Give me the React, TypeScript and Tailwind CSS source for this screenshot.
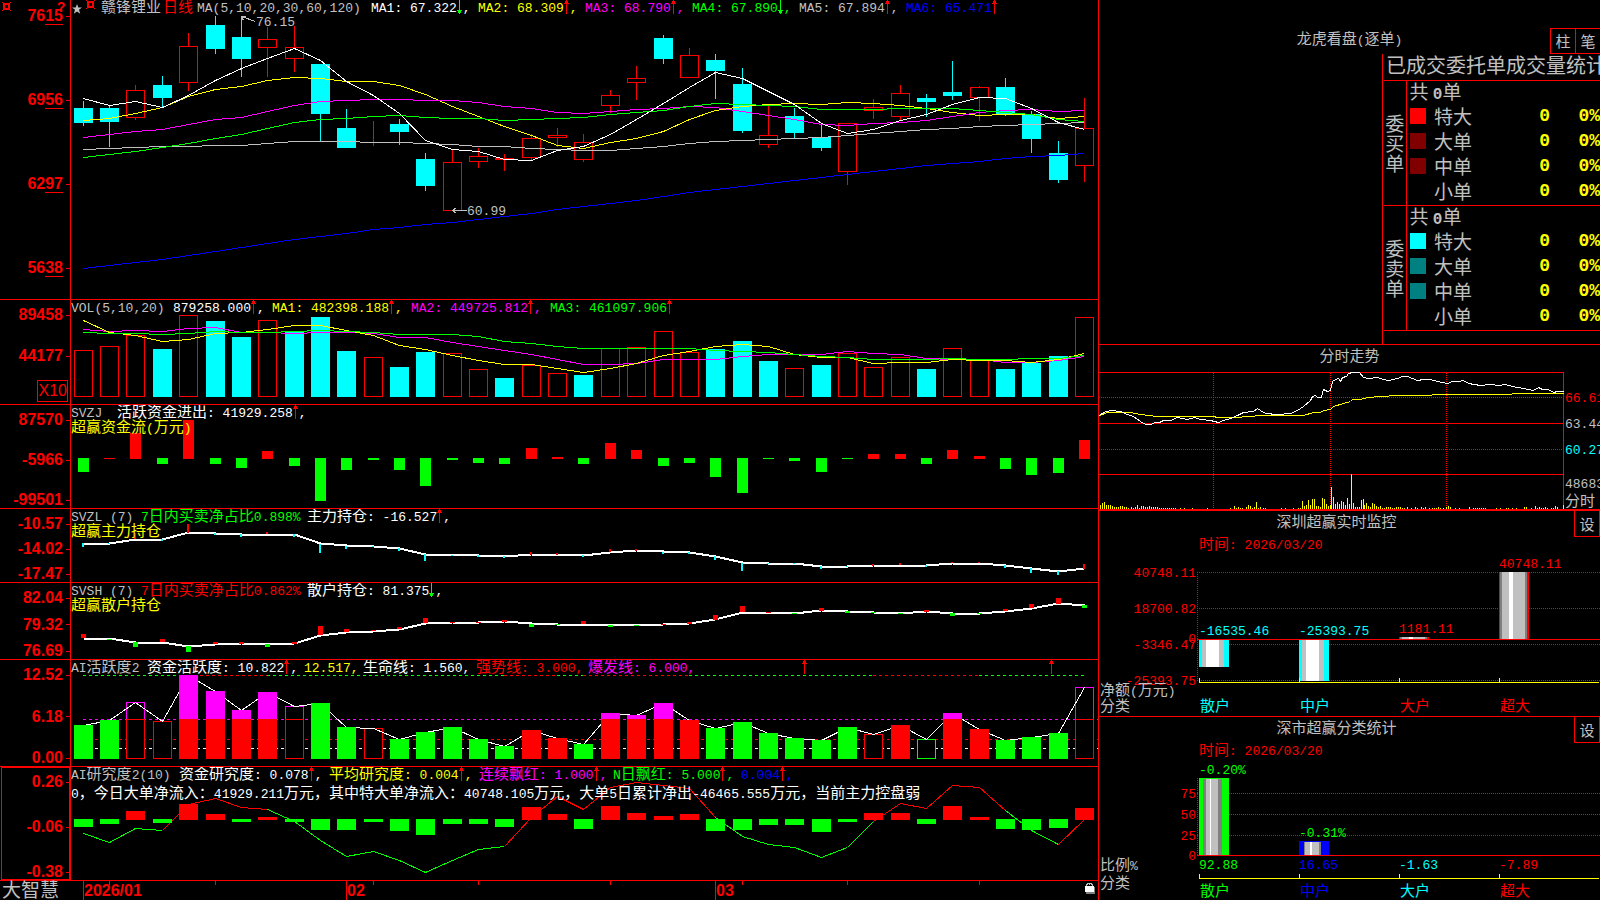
import { ReactNode } from "react";

const RED = "#ff0000";
const CYAN = "#00ffff";
const GREEN = "#00ff00";
const YELLOW = "#ffff00";
const MAGENTA = "#ff00ff";
const BLUE = "#0000ff";
const GRAY = "#c0c0c0";
const DARK = "#808080";
const WHITE = "#ffffff";

const PLOT_W = 1027;

// centre pixel of the n-th trading day inside a plot
const dayX = (i:number) => Math.floor(12.28 + 26.352 * i);

// levels are kept in thirds of a pixel, off is the start of the panel
const level = (v:number, off:number) => Math.round((v - 1) / 3 - off);

type Candle = [number, number, number, number, string];
const candles:Candle[] = [
    [101,108,123,126,'c'],[106,108,122,147,'c'],[85,90,117,120,'r'],[76,85,98,107,'c'],
    [33,46,82,91,'r'],[16,25,49,54,'c'],[16,37,59,77,'c'],[27,39,47,77,'r'],
    [26,47,58,72,'r'],[64,64,114,141,'c'],[109,128,148,148,'c'],[121,122,122,146,'r'],
    [119,124,132,145,'c'],[153,159,186,191,'c'],[150,162,210,210,'r'],[148,156,161,168,'r'],
    [154,158,159,171,'r'],[134,138,157,160,'r'],[128,135,137,147,'r'],[134,142,159,162,'r'],
    [90,95,105,113,'r'],[66,78,82,100,'r'],[35,38,59,64,'c'],[48,55,77,77,'r'],
    [54,60,71,99,'c'],[68,84,131,133,'c'],[106,135,144,148,'r'],[108,116,133,138,'c'],
    [125,137,148,151,'c'],[123,123,171,185,'r'],[99,107,110,119,'r'],[85,93,116,120,'r'],
    [94,98,102,117,'c'],[61,92,96,100,'c'],[86,87,97,121,'r'],[78,87,115,116,'c'],
    [111,114,139,153,'c'],[141,153,180,183,'c'],[98,128,165,182,'r'],
];

const ma5 = [295,316,304,321,286,240,204,176,146,182,243,285,339,421,448,455,478,481,452,440,402,358,310,262,216,236,274,313,370,400,388,361,343,313,293,296,325,367,387];
const ma10 = [361,355,340,322,290,268,259,241,232,235,243,244,256,284,318,350,378,407,435,445,428,414,395,357,330,319,313,310,312,307,311,316,326,338,346,342,342,355,349];
const ma20 = [412,403,394,387,373,358,351,334,316,304,301,298,298,301,302,308,318,324,336,341,334,328,324,319,323,334,347,357,373,376,370,367,361,349,338,331,328,333,331];
const ma30 = [472,463,454,442,430,415,403,385,367,358,355,350,346,352,355,355,360,358,355,352,343,337,330,319,311,313,315,319,328,328,328,325,325,325,332,338,343,358,365];
const ma60 = [448,446,443,439,438,436,436,431,425,425,425,428,428,431,433,439,439,444,449,451,451,446,438,431,425,422,419,416,411,407,400,395,388,385,380,377,373,370,367];
const ma120 = [804,795,786,777,766,754,742,730,718,709,700,689,681,674,666,657,649,640,628,619,611,602,590,577,568,559,550,541,532,522,514,505,496,490,485,476,470,466,460];

type Bar = [number, string];
const volume:Bar[] = [
    [166,'r'],[154,'r'],[121,'r'],[162,'c'],[61,'r'],[78,'c'],[126,'c'],[76,'r'],[108,'c'],[66,'c'],
    [168,'c'],[187,'r'],[216,'c'],[171,'c'],[175,'r'],[223,'r'],[249,'c'],[211,'r'],[235,'r'],[240,'c'],
    [160,'r'],[157,'r'],[109,'r'],[172,'r'],[162,'c'],[138,'c'],[198,'c'],[220,'r'],[210,'c'],[175,'r'],
    [217,'r'],[187,'r'],[222,'c'],[160,'r'],[193,'r'],[222,'c'],[204,'c'],[183,'c'],[67,'r'],
];
const vol5 = [76,112,121,139,133,115,111,103,92,91,107,121,151,163,181,195,207,208,220,232,219,204,182,170,155,148,155,178,186,187,205,202,202,193,196,196,202,193,175];
const vol10 = [103,109,106,109,100,97,111,112,114,112,112,116,127,128,141,154,167,178,192,208,208,205,193,193,193,184,178,178,178,169,175,178,190,193,194,202,202,197,184];
const vol20 = [112,115,115,118,115,110,112,112,110,107,109,113,118,118,118,125,139,145,154,160,160,160,160,160,166,169,173,178,184,188,193,193,193,190,193,193,190,190,181];

const moneyFlow:Bar[] = [
    [531,'g'],[489,'r'],[414,'r'],[507,'g'],[375,'r'],[507,'g'],[519,'g'],[468,'r'],[513,'g'],[618,'g'],
    [525,'g'],[495,'g'],[525,'g'],[573,'g'],[495,'g'],[504,'g'],[507,'g'],[459,'r'],[486,'r'],[507,'g'],
    [444,'r'],[465,'r'],[513,'g'],[504,'g'],[546,'g'],[594,'g'],[492,'g'],[498,'g'],[531,'g'],[492,'g'],
    [477,'r'],[477,'r'],[507,'g'],[465,'r'],[483,'r'],[522,'g'],[540,'g'],[534,'g'],[435,'r'],
];

const mainHold = [115,115,102,102,83,85,87,87,88,116,122,124,129,147,149,151,153,149,149,150,141,137,140,141,154,173,174,174,183,183,182,180,180,174,174,181,189,198,191];
const mainTicks:Bar[] = [
    [126,'c'],[115,'c'],[84,'r'],[108,'c'],[57,'r'],[90,'c'],[96,'c'],[81,'r'],[95,'c'],[144,'c'],
    [131,'c'],[127,'c'],[138,'c'],[168,'c'],[152,'c'],[156,'c'],[158,'c'],[141,'r'],[144,'r'],[156,'c'],
    [132,'r'],[132,'r'],[147,'c'],[147,'c'],[165,'c'],[198,'c'],[177,'c'],[177,'c'],[192,'c'],[186,'c'],
    [177,'r'],[174,'r'],[186,'c'],[171,'r'],[172,'r'],[189,'c'],[204,'c'],[210,'c'],[177,'r'],
];

const retailHold = [399,401,411,411,424,417,416,417,416,391,381,379,373,354,353,352,350,356,357,357,359,360,359,356,344,321,323,324,317,318,322,324,320,324,324,319,310,296,300];
const retailTicks:Bar[] = [
    [387,'r'],[405,'g'],[426,'g'],[402,'r'],[441,'g'],[411,'r'],[411,'r'],[426,'g'],[411,'r'],[363,'r'],
    [372,'r'],[375,'r'],[366,'r'],[339,'r'],[350,'r'],[350,'r'],[345,'r'],[366,'g'],[360,'g'],[348,'r'],
    [366,'g'],[363,'g'],[356,'r'],[350,'r'],[330,'r'],[303,'r'],[320,'r'],[327,'g'],[309,'r'],[324,'g'],
    [325,'g'],[327,'g'],[315,'r'],[333,'g'],[327,'g'],[312,'r'],[297,'r'],[279,'r'],[309,'g'],
];

// g / r are filled, G / R are hollow, m / M carry a magenta cap over the 6.0 line
const activity:Bar[] = [
    [210,'g'],[195,'g'],[142,'M'],[199,'R'],[60,'m'],[108,'m'],[165,'m'],[111,'m'],[154,'M'],[144,'g'],
    [216,'g'],[220,'R'],[252,'g'],[231,'g'],[216,'g'],[252,'g'],[273,'g'],[225,'r'],[249,'r'],[267,'g'],
    [174,'m'],[180,'m'],[144,'m'],[195,'r'],[219,'g'],[201,'g'],[234,'g'],[249,'g'],[255,'g'],[216,'g'],
    [238,'R'],[210,'r'],[253,'G'],[174,'m'],[222,'r'],[255,'g'],[246,'g'],[234,'g'],[97,'M'],
];
const peakRuns:[number, number, string][] = [
    [0,4,GREEN],[4,7,RED],[7,16,GREEN],[16,18,RED],[18,19,GREEN],[19,23,RED],[23,30,GREEN],[30,34,RED],[34,38,GREEN],
];

const research:Bar[] = [
    [516,'g'],[507,'g'],[468,'r'],[504,'g'],[447,'r'],[477,'r'],[501,'g'],[486,'r'],[501,'g'],[525,'g'],
    [525,'g'],[501,'g'],[528,'g'],[540,'g'],[507,'g'],[507,'g'],[516,'g'],[456,'r'],[477,'r'],[522,'g'],
    [453,'r'],[474,'r'],[483,'r'],[477,'r'],[528,'g'],[525,'g'],[510,'g'],[510,'g'],[531,'g'],[501,'g'],
    [474,'r'],[474,'r'],[507,'g'],[453,'r'],[486,'r'],[522,'g'],[525,'g'],[519,'g'],[459,'r'],
];
const researchLine = [535,562,520,526,448,430,457,463,498,556,604,589,616,652,616,583,574,486,425,463,397,382,392,400,487,544,568,577,607,577,500,445,460,391,397,465,526,567,494];
const researchRuns:[number, number, string][] = [
    [0,3,GREEN],[3,7,RED],[7,16,GREEN],[16,24,RED],[24,30,GREEN],[30,35,RED],[35,37,GREEN],[37,38,RED],
];

const minutePrice = [27,227,40,217,60,211,90,213,110,222,128,228,150,243,165,252,180,252,195,246,207,248,218,242,240,240,262,233,290,239,312,233,330,239,360,242,385,246,400,240,420,234,440,225,460,217,490,213,500,206,510,212,525,220,560,224,600,220,620,212,640,200,660,180,665,169,675,167,680,173,692,172,700,147,710,154,720,150,725,125,735,117,745,115,750,123,755,112,768,108,775,100,785,97,808,97,820,112,835,115,860,112,880,118,895,121,920,115,935,109,950,110,980,121,1000,117,1020,119,1040,124,1070,129,1085,124,1105,124,1118,122,1135,130,1170,135,1200,132,1225,135,1245,132,1265,138,1300,144,1330,150,1343,142,1355,147,1375,149,1390,156,1400,154,1420,155];
const minuteAvg = [27,225,50,218,120,217,150,222,200,229,370,230,380,232,440,232,470,229,520,226,640,226,670,218,690,216,700,210,720,207,730,200,780,185,785,178,810,178,830,172,870,169,920,167,1020,165,1030,163,1260,162,1270,160,1420,160];
const minuteVol = [31,12,37,17,43,21,49,12,55,12,61,12,67,9,73,6,79,6,85,6,91,9,97,9,103,6,109,6,115,4,124,6,130,3,136,6,142,12,148,4,154,9,160,9,166,7,172,6,178,9,184,6,190,6,196,6,202,6,208,3,214,3,220,3,226,3,232,3,238,3,244,3,250,3,256,3,271,3,283,3,307,3,352,3,421,3,433,9,439,4,445,6,451,4,457,3,469,6,475,12,481,9,487,3,493,6,499,21,505,3,511,6,520,3,526,3,574,3,586,3,610,3,625,3,631,3,637,24,643,9,649,12,655,27,661,12,667,30,673,30,679,9,685,9,691,6,697,33,703,30,709,15,715,9,721,12,724,66,730,36,736,15,742,21,748,15,754,24,760,21,766,12,772,33,778,15,784,105,790,18,796,6,802,6,808,6,814,27,820,30,823,12,829,18,835,9,841,6,847,18,853,15,859,9,865,6,871,9,877,3,883,3,889,6,895,6,901,6,907,3,913,3,919,6,925,6,931,6,937,3,943,3,952,6,964,3,976,6,982,3,994,6,1000,3,1006,6,1018,3,1026,3,1032,3,1040,3,1045,6,1051,3,1060,3,1069,6,1075,9,1081,6,1096,3,1108,3,1138,6,1150,3,1156,3,1162,3,1168,3,1174,3,1180,3,1186,3,1219,3,1231,3,1249,3,1255,3,1267,3,1279,3,1303,6,1309,6,1324,3,1336,9,1342,3,1348,6,1354,3,1360,3,1366,6,1372,3,1384,3,1390,3,1396,9,1402,6,1420,12];

const CJK = /([\u2e80-\u9fff\uff00-\uffef]+)/;

// latin runs are half width mono, chinese runs are a bit larger
function Mix(props:{children:string}) {
    return (
        <>
            {props.children.split(CJK).map((part,index)=>(
                index % 2 == 1
                    ? <span key={index} className="font-['Noto_Sans_CJK_SC',sans-serif] text-[15px] leading-3">{part}</span>
                    : part
            ))}
        </>
    );
}

function SvgText(props:{x:number, y:number, fill:string, end?:boolean, children:string}) {
    return (
        <text x={props.x} y={props.y} fill={props.fill} textAnchor={props.end ? "end" : "start"} className="text-[13px] whitespace-pre">
            {props.children.split(CJK).map((part,index)=>(
                index % 2 == 1
                    ? <tspan key={index} className="font-['Noto_Sans_CJK_SC',sans-serif] text-[15px]">{part}</tspan>
                    : part
            ))}
        </text>
    );
}

function Arrow(props:{down?:boolean}) {
    return (
        <svg width="6" height="15" viewBox="0 0 6 15" shapeRendering="crispEdges" className="shrink-0">
            {props.down
                ? <path d="M2 0h1v10h2v1h-1v2h-1v1h-1v-1h-1v-2h-1v-1h2z" fill={GREEN}/>
                : <path d="M2 0h1v1h1v2h1v1h-2v10h-1v-10h-2v-1h1v-2h1z" fill={RED}/>}
        </svg>
    );
}

type Seg = { text:string, cls:string, arrow?:'up'|'down', tail?:string };

function Header(props:{segs:Seg[]}) {
    return (
        <div className="relative flex h-[15px] leading-[18px] whitespace-pre">
            {props.segs.map((seg,index)=>(
                <div key={index} className={`flex shrink-0 ${seg.cls}`}>
                    <span><Mix>{seg.text}</Mix></span>
                    {seg.arrow && <Arrow down={seg.arrow == 'down'}/>}
                    {seg.tail && <span>{seg.tail}</span>}
                </div>
            ))}
        </div>
    );
}

function Panel(props:{cls:string, h:number, axis:ReactNode, chart:ReactNode, children:ReactNode}) {
    return (
        <section className={`flex border-b border-[#ff0000] ${props.cls}`}>
            <div className="flex w-[70px] shrink-0 flex-col">{props.axis}</div>
            <div className="relative min-w-0 flex-1 overflow-hidden border-l border-[#ff0000]">
                <svg className="absolute inset-0 h-full w-full" viewBox={`0 0 ${PLOT_W} ${props.h}`} preserveAspectRatio="none" shapeRendering="crispEdges">
                    {props.chart}
                </svg>
                {props.children}
            </div>
        </section>
    );
}

function Axis(props:{labels:string[], cls:string, underline?:boolean}) {
    return (
        <div className={`flex flex-col justify-between ${props.cls}`}>
            {props.labels.map((label)=>(
                <div key={label} className="flex h-4 items-center justify-end gap-[3px] font-['Liberation_Sans',sans-serif] text-base leading-4 font-bold text-[#ff0000]">
                    {props.underline
                        ? <span>{label.slice(0,2)}<span className="border-b border-[#ff0000]">{label.slice(2)}</span></span>
                        : <span>{label}</span>}
                    <span className="h-px w-1 bg-[#ff0000]"/>
                </div>
            ))}
        </div>
    );
}

function Line(props:{data:number[], color:string, off?:number, from?:number, to?:number, width?:number}) {
    const from = props.from ?? 0;
    const to = props.to ?? props.data.length - 1;
    const pts = props.data.slice(from,to + 1).map((v,i)=>`${dayX(i + from) + 0.5},${level(v,props.off ?? 0) + 0.5}`).join(' ');
    return <polyline points={pts} fill="none" stroke={props.color} strokeWidth={props.width ?? 1}/>;
}

function Hollow(props:{i:number, top:number, bottom:number, color:string}) {
    return <rect x={dayX(props.i) - 8.5} y={props.top + 0.5} width={18} height={Math.max(props.bottom - props.top,0)} fill="none" stroke={props.color}/>;
}

// bars hanging from or standing on the zero level
function ZeroBars(props:{data:Bar[], zero:number, off:number, width:number}) {
    return (
        <>
            {props.data.map(([v,kind],i)=>{
                const y = Math.round(v / 3 - props.off);
                const up = kind == 'r';
                const top = up ? y : props.zero;
                const bottom = up ? props.zero + 1 : y;
                return <rect key={i} x={dayX(i) - (props.width - 1) / 2} y={top} width={props.width} height={Math.max(bottom - top,1)} fill={up ? RED : GREEN}/>;
            })}
        </>
    );
}

function Ticks(props:{data:Bar[], line:number[], off:number, width:number}) {
    return (
        <>
            {props.data.map(([v,kind],i)=>{
                const a = Math.round(v / 3 - props.off);
                const b = Math.round(props.line[i] / 3 - props.off);
                const color = kind == 'r' ? RED : kind == 'g' ? GREEN : CYAN;
                return <rect key={i} x={dayX(i) - Math.floor(props.width / 2)} y={Math.min(a,b)} width={props.width} height={Math.max(Math.abs(a - b),1)} fill={color}/>;
            })}
        </>
    );
}

function CandleChart() {
    return (
        <>
            {candles.map(([high,top,bottom,low,kind],i)=>(
                kind == 'c'
                    ? <g key={i} fill={CYAN}>
                        <rect x={dayX(i)} y={high} width={1} height={low - high}/>
                        <rect x={dayX(i) - 9} y={top} width={19} height={bottom - top}/>
                    </g>
                    : <g key={i}>
                        <rect x={dayX(i)} y={high} width={1} height={top - high} fill={RED}/>
                        <rect x={dayX(i)} y={bottom} width={1} height={low - bottom} fill={RED}/>
                        <Hollow i={i} top={top} bottom={bottom} color={RED}/>
                    </g>
            ))}
            <Line data={ma120} color={BLUE}/>
            <Line data={ma60} color={GRAY}/>
            <Line data={ma10} color={YELLOW}/>
            <Line data={ma20} color={MAGENTA}/>
            <Line data={ma30} color={GREEN}/>
            <Line data={ma5} color={WHITE}/>
            <path d="M170.5 16.5l14 5M170.5 16.5h4M170.5 16.5l2 4M381.5 210.5h14M381.5 210.5l4 -3M381.5 210.5l4 3" stroke={GRAY} fill="none"/>
        </>
    );
}

function VolumeChart() {
    return (
        <>
            {volume.map(([v,kind],i)=>{
                const top = Math.round(v / 3 - 5);
                return kind == 'c'
                    ? <rect key={i} x={dayX(i) - 9} y={top} width={19} height={97 - top} fill={CYAN}/>
                    : <Hollow key={i} i={i} top={top} bottom={96} color={RED}/>;
            })}
            <Line data={vol10} color={MAGENTA} off={5}/>
            <Line data={vol5} color={YELLOW} off={5}/>
            <Line data={vol20} color={GREEN} off={5}/>
        </>
    );
}

function ActivityChart() {
    const tops = activity.map((bar)=>bar[0]);
    return (
        <>
            {peakRuns.map(([from,to,color])=>(
                <line key={from} x1={dayX(from)} x2={dayX(to)} y1={15.5} y2={15.5} stroke={color} strokeDasharray="3 3"/>
            ))}
            <line x1={12} x2={PLOT_W} y1={59.5} y2={59.5} stroke={MAGENTA} strokeDasharray="3 3"/>
            <line x1={12} x2={PLOT_W} y1={79.5} y2={79.5} stroke={RED} strokeDasharray="3 3"/>
            <line x1={12} x2={PLOT_W} y1={88.5} y2={88.5} stroke={WHITE} strokeDasharray="3 3"/>
            {activity.map(([v,kind],i)=>{
                const top = Math.round(v / 3 - 5);
                if (!'MRG'.includes(kind)) return null;
                return (
                    <g key={i}>
                        <rect x={dayX(i) - 9} y={top} width={19} height={98 - top} fill="#000000"/>
                        {kind == 'M' && <Hollow i={i} top={top} bottom={59} color={MAGENTA}/>}
                        <Hollow i={i} top={kind == 'M' ? 59 : top} bottom={98} color={kind == 'G' ? GREEN : RED}/>
                    </g>
                );
            })}
            <Line data={tops} color={WHITE} off={5}/>
            {activity.map(([v,kind],i)=>{
                const top = Math.round(v / 3 - 5);
                if (!'mrg'.includes(kind)) return null;
                return (
                    <g key={i}>
                        <rect x={dayX(i) - 9} y={top} width={19} height={99 - top} fill={kind == 'g' ? GREEN : RED}/>
                        {kind == 'm' && <rect x={dayX(i) - 9} y={top} width={19} height={59 - top} fill={MAGENTA}/>}
                    </g>
                );
            })}
        </>
    );
}

function TimeAxis() {
    return (
        <div className="flex h-[19px] text-[#ff0000]">
            <div className="w-[70px] shrink-0 pl-[2px] font-['Noto_Sans_CJK_SC',sans-serif] text-[19px] leading-4 whitespace-nowrap text-[#c0c0c0]">大智慧</div>
            <div className="relative flex-1 border-l border-transparent">
                <svg className="absolute inset-0 h-full w-full" viewBox={`0 0 ${PLOT_W} 19`} preserveAspectRatio="none" shapeRendering="crispEdges">
                    {[0,10,24].map((i)=><rect key={i} x={dayX(i)} y={0} width={1} height={19} fill={RED}/>)}
                    {[1,5,11,15,20,25,29,34].map((i)=><rect key={i} x={dayX(i)} y={0} width={1} height={4} fill={RED}/>)}
                </svg>
                {([[0,"2026/01"],[10,"02"],[24,"03"]] as [number, string][]).map(([i,label])=>(
                    <span key={label} className="absolute top-[1px] pl-px font-['Liberation_Sans',sans-serif] text-base leading-[18px] font-bold" style={{ left: `${dayX(i) / PLOT_W * 100}%` }}>{label}</span>
                ))}
                <svg className="absolute top-[1px] right-[2px]" width="12" height="12" viewBox="0 0 12 12" shapeRendering="crispEdges">
                    <path d="M2.5 4v-2h1v-1h4v1h1v2" fill="none" stroke={GRAY}/>
                    <rect x="5" y="2" width="1" height="1" fill={GRAY}/>
                    <rect x="2" y="5" width="9" height="7" fill={DARK}/>
                    <rect x="1" y="4" width="9" height="6" fill={WHITE}/>
                </svg>
            </div>
        </div>
    );
}

const sides = [
    { side:"委买单", rows:[["特大","bg-[#ff0000]"],["大单","bg-[#800000]"],["中单","bg-[#800000]"],["小单",""]] },
    { side:"委卖单", rows:[["特大","bg-[#00ffff]"],["大单","bg-[#008080]"],["中单","bg-[#008080]"],["小单",""]] },
];

function OrderTable() {
    return (
        <div className="ml-[283px] h-[290px] overflow-hidden border-l border-[#ff0000] pl-px font-['Noto_Sans_CJK_SC',sans-serif] text-[19px] leading-5 text-[#c0c0c0]">
            <h3 className="h-[26px] pl-[2px] text-xl leading-[22px] whitespace-nowrap">已成交委托单成交量统计</h3>
            <table className="w-full table-fixed border-collapse">
                <colgroup>
                    <col className="w-[22px]"/>
                    <col className="w-[26px]"/>
                    <col/>
                    <col className="w-10"/>
                    <col className="w-[50px]"/>
                </colgroup>
                {sides.map((group)=>(
                    <tbody key={group.side} className="border-y border-[#ff0000] align-top">
                        <tr className="h-[25px]">
                            <th rowSpan={5} className="border-r border-[#ff0000] p-0 text-center align-middle font-normal">
                                {group.side.split('').map((ch)=><span key={ch} className="block">{ch}</span>)}
                            </th>
                            <td colSpan={4} className="p-0 pl-[3px]">共 <b className="font-['Liberation_Mono',monospace] text-base leading-4">0</b>单</td>
                        </tr>
                        {group.rows.map(([name,color])=>(
                            <tr key={name} className="h-[25px]">
                                <td className="p-0 pt-[2px] pl-[3px]"><span className={`block size-4 ${color}`}/></td>
                                <td className="p-0 pl-[2px]">{name}</td>
                                <td className="p-0 text-right font-['Liberation_Mono',monospace] text-lg leading-5 font-bold text-[#ffff00]">0</td>
                                <td className="p-0 text-right font-['Liberation_Mono',monospace] text-lg leading-5 font-bold text-[#ffff00]">0%</td>
                            </tr>
                        ))}
                    </tbody>
                ))}
            </table>
        </div>
    );
}

const BUTTON = "h-[26px] w-[26px] shrink-0 border border-[#ff0000] font-['Noto_Sans_CJK_SC',sans-serif] text-[15px] leading-5 text-[#c0c0c0]";

function MinuteChart() {
    const pairs = (data:number[]) => data.reduce<string[]>((out,v,i)=>{
        if (i % 2 == 0) out.push(`${Math.round((v - 27) / 3) + 0.5},${Math.round((data[i + 1] - 1) / 3 - 31) + 0.5}`);
        return out;
    },[]).join(' ');

    return (
        <svg className="block" width="502" height="138" viewBox="0 0 502 138">
            <g shapeRendering="crispEdges" fill="none" stroke={RED}>
                <path d="M0 1.500h464.500v136.500M0 52.500h464M0 103.500h464"/>
                <path d="M0 26.500h464M0 78.500h464M114.500 2v136M231.500 2v136M347.500 2v136" strokeDasharray="1 1"/>
                {minuteVol.map((v,i)=>(
                    i % 2 == 0 && <rect key={i} x={Math.round((v - 28) / 3)} y={138 - Math.round(minuteVol[i + 1] / 3)} width={1} height={Math.round(minuteVol[i + 1] / 3)} fill={YELLOW} stroke="none"/>
                ))}
                <polyline points={pairs(minuteAvg)} stroke={YELLOW}/>
                <polyline points={pairs(minutePrice)} stroke={WHITE}/>
            </g>
            <SvgText x={466} y={31} fill={RED}>66.61</SvgText>
            <SvgText x={466} y={57} fill={GRAY}>63.44</SvgText>
            <SvgText x={466} y={83} fill={CYAN}>60.27</SvgText>
            <SvgText x={466} y={117} fill={GRAY}>48683</SvgText>
            <SvgText x={466} y={135} fill={GRAY}>分时</SvgText>
        </svg>
    );
}

// vertical stripes that make a bar look like a cylinder
function Cylinder(props:{x:number, top:number, bottom:number, stripes:[number, string][]}) {
    let x = props.x;
    return (
        <g shapeRendering="crispEdges">
            {props.stripes.map(([w,color],i)=>{
                const at = x;
                x += w;
                return <rect key={i} x={at} y={props.top} width={w} height={props.bottom - props.top} fill={color}/>;
            })}
        </g>
    );
}

const lightTube:[number, string][] = [[3,CYAN],[4,GRAY],[13,WHITE],[5,GRAY],[5,CYAN]];
const redTube:[number, string][] = [[1,RED],[2,DARK],[7,GRAY],[4,WHITE],[12,GRAY],[2,DARK],[2,RED]];
const greenTube:[number, string][] = [[4,GREEN],[3,DARK],[4,GRAY],[1,WHITE],[7,GRAY],[4,DARK],[7,GREEN]];
const blueTube:[number, string][] = [[5,BLUE],[1,DARK],[5,GRAY],[2,WHITE],[7,GRAY],[2,DARK],[8,BLUE]];

function MonitorChart() {
    return (
        <svg className="block" width="502" height="179" viewBox="0 0 502 179">
            <g shapeRendering="crispEdges" fill="none">
                <path d="M98.500 35v108M98 35.500h404M98 71.500h404M98 107.500h404M98 143.500h404" stroke={RED} strokeDasharray="1 1"/>
                <path d="M98 102.500h404" stroke={RED}/>
            </g>
            <Cylinder x={100} top={103} bottom={130} stripes={lightTube}/>
            <Cylinder x={200} top={103} bottom={144} stripes={lightTube}/>
            <Cylinder x={300} top={100} bottom={102} stripes={redTube}/>
            <Cylinder x={400} top={35} bottom={102} stripes={redTube}/>
            <path d="M100.500 141v4.500h399.500M200.500 141v4M300.500 141v4M400.500 141v4" stroke={YELLOW} fill="none" shapeRendering="crispEdges"/>
            <SvgText x={100} y={12} fill={RED}>时间: 2026/03/20</SvgText>
            <SvgText x={97} y={40} fill={RED} end>40748.11</SvgText>
            <SvgText x={97} y={76} fill={RED} end>18700.82</SvgText>
            <SvgText x={97} y={106} fill={RED} end>0</SvgText>
            <SvgText x={97} y={112} fill={RED} end>-3346.47</SvgText>
            <SvgText x={97} y={148} fill={RED} end>-25393.75</SvgText>
            <SvgText x={100} y={98} fill={CYAN}>-16535.46</SvgText>
            <SvgText x={200} y={98} fill={CYAN}>-25393.75</SvgText>
            <SvgText x={300} y={96} fill={RED}>1181.11</SvgText>
            <SvgText x={400} y={31} fill={RED}>40748.11</SvgText>
            <SvgText x={1} y={158} fill={GRAY}>净额(万元)</SvgText>
            <SvgText x={1} y={174} fill={GRAY}>分类</SvgText>
            <SvgText x={101} y={174} fill={CYAN}>散户</SvgText>
            <SvgText x={201} y={174} fill={CYAN}>中户</SvgText>
            <SvgText x={301} y={174} fill={RED}>大户</SvgText>
            <SvgText x={401} y={174} fill={RED}>超大</SvgText>
        </svg>
    );
}

function ShareChart() {
    return (
        <svg className="block" width="502" height="157" viewBox="0 0 502 157">
            <g shapeRendering="crispEdges" fill="none">
                <path d="M98.500 35v77M98 50.500h404M98 71.500h404M98 92.500h404" stroke={RED} strokeDasharray="1 1"/>
                <path d="M98 112.500h404" stroke={RED}/>
            </g>
            <Cylinder x={100} top={36} bottom={112} stripes={greenTube}/>
            <Cylinder x={200} top={99} bottom={112} stripes={blueTube}/>
            <rect x={100} y={35} width={30} height={1} fill={GREEN}/>
            <rect x={200} y={98} width={30} height={1} fill={BLUE}/>
            <path d="M100.500 131v4.500h399.500M200.500 131v4M300.500 131v4M400.500 131v4" stroke={YELLOW} fill="none" shapeRendering="crispEdges"/>
            <SvgText x={100} y={12} fill={RED}>时间: 2026/03/20</SvgText>
            <SvgText x={100} y={31} fill={GREEN}>-0.20%</SvgText>
            <SvgText x={200} y={94} fill={GREEN}>-0.31%</SvgText>
            <SvgText x={97} y={55} fill={RED} end>75</SvgText>
            <SvgText x={97} y={76} fill={RED} end>50</SvgText>
            <SvgText x={97} y={97} fill={RED} end>25</SvgText>
            <SvgText x={97} y={117} fill={RED} end>0</SvgText>
            <SvgText x={100} y={126} fill={GREEN}>92.88</SvgText>
            <SvgText x={200} y={126} fill={BLUE}>16.65</SvgText>
            <SvgText x={300} y={126} fill={CYAN}>-1.63</SvgText>
            <SvgText x={400} y={126} fill={RED}>-7.89</SvgText>
            <SvgText x={1} y={127} fill={GRAY}>比例%</SvgText>
            <SvgText x={1} y={145} fill={GRAY}>分类</SvgText>
            <SvgText x={101} y={153} fill={GREEN}>散户</SvgText>
            <SvgText x={201} y={153} fill={BLUE}>中户</SvgText>
            <SvgText x={301} y={153} fill={CYAN}>大户</SvgText>
            <SvgText x={401} y={153} fill={RED}>超大</SvgText>
        </svg>
    );
}

function Burst() {
    return (
        <svg width="9" height="9" viewBox="0 0 9 9" shapeRendering="crispEdges">
            <path d="M0 0h1v1h-1zM8 0h1v1h-1zM0 8h1v1h-1zM8 8h1v1h-1z" fill={RED}/>
            <rect x="2" y="2" width="5" height="5" fill="none" stroke={RED} strokeWidth="2"/>
        </svg>
    );
}

function Title(props:{children:string}) {
    return <h2 className="h-[26px] text-center leading-[26px]"><Mix>{props.children}</Mix></h2>;
}

function App() {
    return (
        <div className="flex min-h-screen overflow-hidden bg-black font-['Liberation_Mono',monospace] text-[13px] text-[#c0c0c0]">
            <main className="min-w-0 flex-1">
                <Panel cls="h-[300px]" h={299} chart={<CandleChart/>} axis={
                    <div className="relative h-full">
                        <Axis labels={["7615","6956","6297","5638"]} cls="h-full pt-2 pb-[23px]" underline/>
                        <span className="absolute top-[2px] left-[2px]"><Burst/></span>
                        <span className="absolute top-0 left-[57px] text-sm leading-4 font-bold text-[#ff0000]">?</span>
                    </div>
                }>
                    <div className="relative flex h-4 leading-[18px] whitespace-pre">
                        <span className="flex w-[30px] shrink-0 gap-1 pl-px">
                            <svg width="10" height="14" viewBox="0 -4 10 14"><path d="M5 0l1.300 3.500h3.700l-3 2.300l1.200 3.900l-3.200 -2.300l-3.200 2.300l1.200 -3.900l-3 -2.300h3.700z" fill={GRAY}/></svg>
                            <Burst/>
                        </span>
                        <span className="w-[62px] shrink-0"><Mix>赣锋锂业</Mix></span>
                        <span className="w-[34px] shrink-0 text-[#ff0000]"><Mix>日线</Mix></span>
                        <span className="w-[174px] shrink-0">MA(5,10,20,30,60,120)</span>
                        <Header segs={[
                            { text:"MA1: 67.322", cls:"w-[107px] text-white", arrow:'down', tail:"," },
                            { text:"MA2: 68.309", cls:"w-[107px] text-[#ffff00]", arrow:'up', tail:"," },
                            { text:"MA3: 68.790", cls:"w-[107px] text-[#ff00ff]", arrow:'up', tail:"," },
                            { text:"MA4: 67.890", cls:"w-[107px] text-[#00ff00]", arrow:'down', tail:"," },
                            { text:"MA5: 67.894", cls:"w-[107px]", arrow:'up', tail:"," },
                            { text:"MA6: 65.471", cls:"text-[#0000ff]", arrow:'up' },
                        ]}/>
                    </div>
                    <span className="absolute top-[15px] leading-4" style={{ left: `${185 / PLOT_W * 100}%` }}>76.15</span>
                    <span className="absolute top-[204px] leading-4" style={{ left: `${396 / PLOT_W * 100}%` }}>60.99</span>
                </Panel>

                <Panel cls="h-[105px]" h={104} chart={<VolumeChart/>} axis={
                    <>
                        <Axis labels={["89458","44177"]} cls="h-16 pt-[7px]"/>
                        <span className="mt-4 mr-[2px] self-end border border-[#ff0000] pl-px font-['Liberation_Sans',sans-serif] text-base leading-5 text-[#ff0000]">X10</span>
                    </>
                }>
                    <Header segs={[
                        { text:"VOL(5,10,20)", cls:"w-[102px]" },
                        { text:"879258.000", cls:"w-[99px] text-white", arrow:'up', tail:"," },
                        { text:"MA1: 482398.188", cls:"w-[139px] text-[#ffff00]", arrow:'up', tail:"," },
                        { text:"MA2: 449725.812", cls:"w-[139px] text-[#ff00ff]", arrow:'up', tail:"," },
                        { text:"MA3: 461097.906", cls:"text-[#00ff00]", arrow:'up' },
                    ]}/>
                </Panel>

                <Panel cls="h-[104px]" h={103} chart={<ZeroBars data={moneyFlow} zero={53} off={110} width={11}/>} axis={<Axis labels={["87570","-5966","-99501"]} cls="h-full pt-[7px]"/>}>
                    <Header segs={[
                        { text:"SVZJ", cls:"w-[46px]" },
                        { text:"活跃资金进出: 41929.258", cls:"text-white", arrow:'up', tail:"," },
                    ]}/>
                    <Header segs={[{ text:"超赢资金流(万元)", cls:"text-[#ffff00]" }]}/>
                </Panel>

                <Panel cls="h-[74px]" h={73} chart={<><Line data={mainHold} color={WHITE} off={4} width={2}/><Ticks data={mainTicks} line={mainHold} off={4} width={2}/></>} axis={<Axis labels={["-10.57","-14.02","-17.47"]} cls="h-full pt-[7px]"/>}>
                    <Header segs={[
                        { text:"SVZL (7)", cls:"w-[70px]" },
                        { text:"7日内买卖净占比0.898%", cls:"w-[166px] text-[#00ff00]" },
                        { text:"主力持仓: -16.527", cls:"text-white", arrow:'up', tail:"," },
                    ]}/>
                    <Header segs={[{ text:"超赢主力持仓", cls:"text-[#ffff00]" }]}/>
                </Panel>

                <Panel cls="h-[77px]" h={76} chart={<><Line data={retailHold} color={WHITE} off={78} width={2}/><Ticks data={retailTicks} line={retailHold} off={78} width={5}/></>} axis={<Axis labels={["82.04","79.32","76.69"]} cls="h-full pt-[7px]"/>}>
                    <Header segs={[
                        { text:"SVSH (7)", cls:"w-[70px]" },
                        { text:"7日内买卖净占比0.862%", cls:"w-[166px] text-[#ff0000]" },
                        { text:"散户持仓: 81.375", cls:"text-white", arrow:'down', tail:"," },
                    ]}/>
                    <Header segs={[{ text:"超赢散户持仓", cls:"text-[#ffff00]" }]}/>
                </Panel>

                <Panel cls="h-[107px]" h={106} chart={<ActivityChart/>} axis={<Axis labels={["12.52","6.18","0.00"]} cls="h-full pt-[7px]"/>}>
                    <Header segs={[
                        { text:"AI活跃度2", cls:"w-[76px]" },
                        { text:"资金活跃度: 10.822", cls:"w-[157px] text-white", arrow:'up', tail:"," },
                        { text:"12.517,", cls:"w-[59px] text-[#ffff00]" },
                        { text:"生命线: 1.560,", cls:"w-[113px] text-white" },
                        { text:"强势线: 3.000,", cls:"w-[112px] text-[#ff0000]" },
                        { text:"爆发线: 6.000,", cls:"w-[214px] text-[#ff00ff]" },
                        { text:"", cls:"w-[247px]", arrow:'up' },
                        { text:"", cls:"", arrow:'up' },
                    ]}/>
                </Panel>

                <Panel cls="h-[114px]" h={113} chart={
                    <>
                        {researchRuns.map(([from,to,color])=>(
                            <Line key={from} data={researchLine} color={color} off={112} from={from} to={to}/>
                        ))}
                        <ZeroBars data={research} zero={52} off={112} width={19}/>
                    </>
                } axis={
                    <div className="relative h-full">
                        <Axis labels={["0.26","-0.06","-0.38"]} cls="h-full pt-[7px]"/>
                        <span className="absolute inset-0 ml-px border border-[#ff0000]"/>
                    </div>
                }>
                    <Header segs={[
                        { text:"AI研究度2(10)", cls:"w-[108px]" },
                        { text:"资金研究度: 0.078", cls:"w-[150px] text-white", arrow:'up', tail:"," },
                        { text:"平均研究度: 0.004", cls:"w-[150px] text-[#ffff00]", arrow:'up', tail:"," },
                        { text:"连续飘红: 1.000", cls:"w-[134px] text-[#ff00ff]", arrow:'up', tail:"," },
                        { text:"N日飘红: 5.000", cls:"w-[128px] text-[#00ff00]", arrow:'up', tail:"," },
                        { text:"0.004", cls:"text-[#0000ff]", arrow:'up', tail:"," },
                    ]}/>
                    <p className="relative mt-1 leading-[18px] whitespace-nowrap text-white">
                        <Mix>0，今日大单净流入：41929.211万元，其中特大单净流入：40748.105万元，大单5日累计净出-46465.555万元，当前主力控盘弱</Mix>
                    </p>
                </Panel>
                <TimeAxis/>
            </main>

            <aside className="w-[502px] shrink-0 overflow-hidden border-l border-[#ff0000]">
                <section className="h-[345px] border-b border-[#ff0000] pt-7">
                    <div className="grid grid-cols-[50px_1fr_50px]">
                        <div className="col-start-2"><Title>龙虎看盘(逐单)</Title></div>
                        <div className="flex">
                            <button className={BUTTON}>柱</button>
                            <button className={`${BUTTON} -ml-px`}>笔</button>
                        </div>
                    </div>
                    <OrderTable/>
                </section>
                <section className="border-b-2 border-[#ff0000]">
                    <Title>分时走势</Title>
                    <MinuteChart/>
                </section>
                <section className="border-b border-[#ff0000]">
                    <div className="flex">
                        <div className="flex-1"><Title>深圳超赢实时监控</Title></div>
                        <button className={`${BUTTON} border-t-0`}>设</button>
                    </div>
                    <MonitorChart/>
                </section>
                <section>
                    <div className="flex">
                        <div className="flex-1"><Title>深市超赢分类统计</Title></div>
                        <button className={`${BUTTON} border-t-0`}>设</button>
                    </div>
                    <ShareChart/>
                </section>
            </aside>
        </div>
    );
}

export default App;
